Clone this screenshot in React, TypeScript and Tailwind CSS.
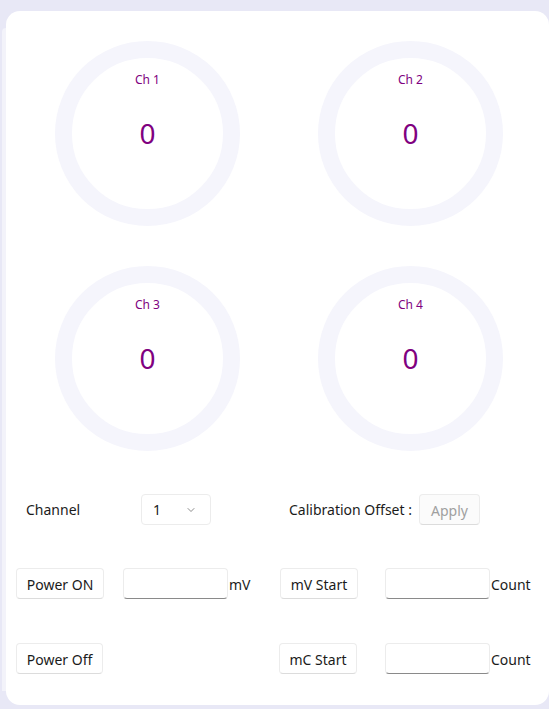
import { ChevronDown } from 'lucide-react';

const font = { fontFamily: '"Noto Sans", "Segoe UI", sans-serif' };

function Gauge({ label }: { label: string }) {
  return (
    <div className="w-[185px] h-[185px] rounded-full border-[17px] border-[#f5f5fc] flex flex-col items-center text-[#800080]">
      <div className="mt-[16px] text-[12px] leading-none">{label}</div>
      <div className="mt-[33px] text-[28px] leading-none">0</div>
    </div>
  );
}

function Btn({ children, w, muted }: { children: React.ReactNode; w: string; muted?: boolean }) {
  return (
    <button
      className={`${w} h-[31px] pt-[2px] rounded-[4px] border border-[#ececec] border-b-[#dcdcdc] text-[14px] ${
        muted ? 'bg-[#fbfbfb] text-[#a0a0a0]' : 'bg-white text-[#1b1b1b]'
      }`}
    >
      {children}
    </button>
  );
}

function Field({ w }: { w: string }) {
  return <div className={`${w} h-[31px] rounded-[4px] border border-[#ececec] border-b-[#8a8a8a] bg-white`} />;
}

export default function App() {
  return (
    <div className="w-[549px] h-[709px] bg-[#e8e8f6] flex overflow-hidden" style={font}>
      <div className="w-[2px] shrink-0" />
      <div className="w-[4px] shrink-0 mt-[28px] mb-[18px] bg-[#f3f3fa] rounded-tl-[6px]" />
      <div className="mt-[11px] h-[694px] w-[543px] shrink-0 bg-white rounded-[14px] text-[#1b1b1b]">
        {/* Gauges */}
        <div className="pt-[30px] pl-[49px] grid grid-cols-[185px_185px] gap-x-[78px] gap-y-[40px]">
          <Gauge label="Ch 1" />
          <Gauge label="Ch 2" />
          <Gauge label="Ch 3" />
          <Gauge label="Ch 4" />
        </div>

        {/* Channel / calibration */}
        <div className="mt-[43px] flex items-center text-[14px]">
          <div className="w-[135px] pl-[20px]">Channel</div>
          <div className="w-[70px] h-[31px] rounded-[4px] border border-[#ececec] flex items-center justify-between pl-[11px] pr-[13px]">
            <span>1</span>
            <ChevronDown size={12} strokeWidth={1.5} className="text-[#666]" />
          </div>
          <div className="ml-[78px] w-[130px]">Calibration Offset :</div>
          <Btn w="w-[61px]" muted>Apply</Btn>
        </div>

        {/* Power ON row */}
        <div className="mt-[43px] flex items-center text-[14px] pl-[10px]">
          <Btn w="w-[88px]">Power ON</Btn>
          <div className="ml-[19px]"><Field w="w-[105px]" /></div>
          <span className="ml-[1px] w-[51px] shrink-0 pt-[2px]">mV</span>
          <Btn w="w-[78px]">mV Start</Btn>
          <div className="ml-[27px]"><Field w="w-[105px]" /></div>
          <span className="ml-[1px] pt-[2px]">Count</span>
        </div>

        {/* Power Off row */}
        <div className="mt-[44px] flex items-center text-[14px] pl-[10px]">
          <Btn w="w-[87px]">Power Off</Btn>
          <div className="ml-[176px]"><Btn w="w-[78px]">mC Start</Btn></div>
          <div className="ml-[28px]"><Field w="w-[105px]" /></div>
          <span className="ml-[1px] pt-[2px]">Count</span>
        </div>
      </div>
    </div>
  );
}
